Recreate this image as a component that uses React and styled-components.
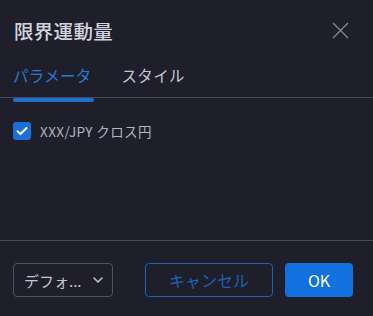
import React from "react";
import styled, { createGlobalStyle } from "styled-components";

const Global = createGlobalStyle`
  html, body { margin: 0; padding: 0; background: #1e1f2b; }
  body { font-family: "Noto Sans CJK JP", "Noto Sans", sans-serif; }
  * { box-sizing: border-box; }
`;

const Dialog = styled.div`
  width: 373px;
  height: 316px;
  background: #1e1f2b;
  display: flex;
  flex-direction: column;
  color: #d1d4dc;
`;

const Header = styled.div`
  height: 60px;
  display: flex;
  align-items: center;
  justify-content: space-between;
  padding: 0 24px 0 14px;
`;

const Title = styled.div`
  font-size: 19.5px;
  font-weight: 500;
  color: #d1d4dc;
  letter-spacing: 0.3px;
`;

const CloseButton = styled.button`
  background: none;
  border: none;
  padding: 0;
  width: 18px;
  height: 18px;
  display: flex;
  align-items: center;
  justify-content: center;
`;

const TabBar = styled.div`
  height: 38px;
  display: flex;
  gap: 30px;
  padding: 0 13px;
  border-bottom: 1px solid #4a4c58;
`;

const Tab = styled.div`
  position: relative;
  font-size: 15.5px;
  letter-spacing: 0.3px;
  line-height: 30px;
  color: ${(p) => (p.$active ? "#2a7bd3" : "#c3c6ce")};
  &::after {
    content: "";
    display: ${(p) => (p.$active ? "block" : "none")};
    position: absolute;
    left: 0;
    right: -2px;
    top: 38px;
    height: 4px;
    border-radius: 2px;
    background: #1f6fd0;
  }
`;

const Body = styled.div`
  flex: 1;
  padding: 23px 13px 0;
`;

const CheckRow = styled.label`
  display: flex;
  align-items: center;
  gap: 9px;
  font-size: 13.5px;
  letter-spacing: 0.4px;
  color: #b2b5be;
`;

const Box = styled.span`
  width: 18px;
  height: 18px;
  border-radius: 3px;
  background: #1a6fdb;
  display: flex;
  align-items: center;
  justify-content: center;
`;

const Footer = styled.div`
  border-top: 1px solid #4a4c58;
  display: flex;
  align-items: center;
  padding: 22px 20px 19px 13px;
`;

const Select = styled.div`
  width: 100px;
  height: 34px;
  border: 1px solid #50535e;
  border-radius: 4px;
  display: flex;
  align-items: center;
  justify-content: space-between;
  padding: 0 8px 0 10px;
  font-size: 15px;
  color: #c3c6ce;
`;

const Button = styled.button`
  height: 34px;
  border-radius: 4px;
  font-family: inherit;
  font-size: 16px;
  display: flex;
  align-items: center;
  justify-content: center;
  padding: 0;
`;

const CancelButton = styled(Button)`
  width: 128px;
  margin-left: 32px;
  background: transparent;
  border: 1px solid #1c62b8;
  color: #1c62b8;
`;

const OkButton = styled(Button)`
  width: 68px;
  margin-left: 12px;
  background: #1271de;
  border: none;
  color: #ffffff;
`;

export default function App() {
  return (
    <>
      <Global />
      <Dialog>
        <Header>
          <Title>限界運動量</Title>
          <CloseButton aria-label="close">
            <svg width="17" height="17" viewBox="0 0 17 17" fill="none" stroke="#858892" strokeWidth="1.4">
              <path d="M1 1L16 16M16 1L1 16" />
            </svg>
          </CloseButton>
        </Header>
        <TabBar>
          <Tab $active>パラメータ</Tab>
          <Tab>スタイル</Tab>
        </TabBar>
        <Body>
          <CheckRow>
            <Box>
              <svg width="12" height="10" viewBox="0 0 12 10" fill="none" stroke="#fff" strokeWidth="2" strokeLinecap="round" strokeLinejoin="round">
                <path d="M1.5 5.2L4.5 8L10.5 2" />
              </svg>
            </Box>
            XXX/JPY クロス円
          </CheckRow>
        </Body>
        <Footer>
          <Select>
            <span>デフォ...</span>
            <svg width="12" height="8" viewBox="0 0 12 8" fill="none" stroke="#c3c6ce" strokeWidth="1.6" strokeLinecap="round" strokeLinejoin="round">
              <path d="M2 2L6 6L10 2" />
            </svg>
          </Select>
          <CancelButton>キャンセル</CancelButton>
          <OkButton>OK</OkButton>
        </Footer>
      </Dialog>
    </>
  );
}
